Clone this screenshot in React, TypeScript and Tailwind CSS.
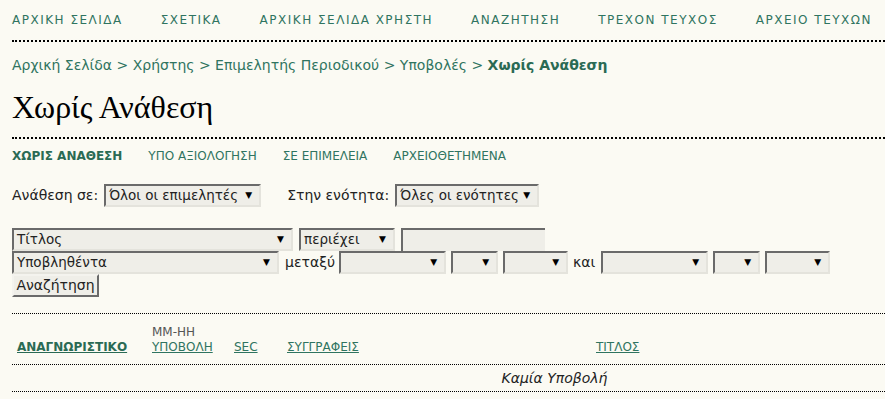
import React from "react";

const LINK = "text-[#2f7460]";

function Sel({ w, text }: { w: number; text?: string }) {
  return (
    <div
      className="flex h-[23px] shrink-0 items-center justify-between border-l-2 border-t-2 border-r-2 border-b-2 border-l-[#6a6a6a] border-t-[#6a6a6a] border-r-[#e4e3dc] border-b-[#e4e3dc] bg-[#efeee8] pl-[3px] pr-[7px] text-[13.5px] leading-none text-[#222]"
      style={{ width: w }}
    >
      <span className="whitespace-nowrap">{text ?? ""}</span>
      <span className="text-[9px] text-black">▼</span>
    </div>
  );
}

export default function App() {
  const nav = [
    "ΑΡΧΙΚΗ ΣΕΛΙΔΑ",
    "ΣΧΕΤΙΚΑ",
    "ΑΡΧΙΚΗ ΣΕΛΙΔΑ ΧΡΗΣΤΗ",
    "ΑΝΑΖΗΤΗΣΗ",
    "ΤΡΕΧΟΝ ΤΕΥΧΟΣ",
    "ΑΡΧΕΙΟ ΤΕΥΧΩΝ",
  ];
  return (
    <div className="min-h-[399px] w-[885px] overflow-hidden bg-[#fbfaf3] font-['DejaVu_Sans'] text-[#222]">
      <div className="ml-3">
        {/* top nav */}
        <div className="flex h-[42px] items-start gap-[38px] border-b-2 border-dotted border-black pt-[13px] whitespace-nowrap">
          {nav.map((n) => (
            <span key={n} className={`${LINK} text-[12px] leading-[15px] tracking-[1.5px]`}>
              {n}
            </span>
          ))}
        </div>

        {/* breadcrumb */}
        <div className={`mt-[15px] text-[14px] leading-[17px] ${LINK} whitespace-nowrap`}>
          Αρχική Σελίδα &gt; Χρήστης &gt; Επιμελητής Περιοδικού &gt; Υποβολές &gt;{" "}
          <span className="font-bold text-[#2a6a54]">Χωρίς Ανάθεση</span>
        </div>

        {/* heading */}
        <h1 className="mt-[16px] h-[49px] border-b-2 border-dotted border-black font-['Liberation_Serif'] text-[32px] leading-[34px] text-black">
          Χωρίς Ανάθεση
        </h1>

        {/* tabs */}
        <div className="mt-[10px] flex gap-[26px] text-[12px] leading-[15px] whitespace-nowrap">
          <span className="font-bold text-[#2a6a54]">ΧΩΡΙΣ ΑΝΑΘΕΣΗ</span>
          <span className={LINK}>ΥΠΟ ΑΞΙΟΛΟΓΗΣΗ</span>
          <span className={LINK}>ΣΕ ΕΠΙΜΕΛΕΙΑ</span>
          <span className={LINK}>ΑΡΧΕΙΟΘΕΤΗΜΕΝΑ</span>
        </div>

        {/* assignment filter */}
        <div className="mt-[20px] flex items-center text-[14px] whitespace-nowrap">
          <span>Ανάθεση σε:</span>
          <div className="ml-[6px]">
            <Sel w={157} text="Όλοι οι επιμελητές" />
          </div>
          <span className="ml-[26px]">Στην ενότητα:</span>
          <div className="ml-[6px]">
            <Sel w={144} text="Όλες οι ενότητες" />
          </div>
        </div>

        {/* search */}
        <div className="mt-[21px] flex flex-col text-[14px]">
          <div className="flex items-center gap-[6px]">
            <Sel w={281} text="Τίτλος" />
            <Sel w={96} text="περιέχει" />
            <div className="h-[23px] w-[144px] border-l-2 border-t-2 border-l-[#6a6a6a] border-t-[#6a6a6a] bg-[#efeee8]" />
          </div>
          <div className="flex items-center whitespace-nowrap">
            <Sel w={267} text="Υποβληθέντα" />
            <span className="ml-[6px] mr-[4px]">μεταξύ</span>
            <Sel w={107} />
            <div className="ml-[5px]"><Sel w={47} /></div>
            <div className="ml-[5px]"><Sel w={65} /></div>
            <span className="ml-[5px] mr-[6px]">και</span>
            <Sel w={107} />
            <div className="ml-[5px]"><Sel w={47} /></div>
            <div className="ml-[5px]"><Sel w={65} /></div>
          </div>
          <div className="flex">
            <div className="flex h-[23px] w-[87px] items-center justify-center border-2 border-l-[#f4f3ee] border-t-[#f4f3ee] border-r-[#6a6a6a] border-b-[#6a6a6a] bg-[#efeee8] text-[14px] text-[#222]">
              Αναζήτηση
            </div>
          </div>
        </div>

        {/* table */}
        <div className="mt-[16px] border-b border-dotted border-black" />
        <div className="flex h-[50px] items-end pb-[9px] text-[12px] leading-[15px] whitespace-nowrap">
          <span className="ml-[5px] w-[135px] font-bold text-[#2a6a54] underline">ΑΝΑΓΝΩΡΙΣΤΙΚΟ</span>
          <span className="w-[82px] flex flex-col">
            <span className="text-[#555]">ΜΜ-ΗΗ</span>
            <span className={`${LINK} underline`}>ΥΠΟΒΟΛΗ</span>
          </span>
          <span className={`${LINK} w-[53px] underline`}>SEC</span>
          <span className={`${LINK} w-[309px] underline`}>ΣΥΓΓΡΑΦΕΙΣ</span>
          <span className={`${LINK} underline`}>ΤΙΤΛΟΣ</span>
        </div>
        <div className="border-b border-dotted border-black" />
        <div className="flex h-[26px] items-center justify-center pl-[212px] text-[14px] italic text-[#222]">
          Καμία Υποβολή
        </div>
        <div className="border-b border-dotted border-black" />
      </div>
    </div>
  );
}
